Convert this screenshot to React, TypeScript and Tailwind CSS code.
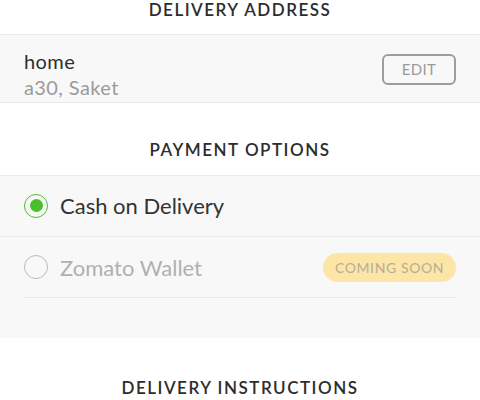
import React from "react";

export default function App() {
  return (
    <div
      className="w-[480px] h-[400px] bg-white overflow-hidden"
      style={{ fontFamily: "Lato, 'Noto Sans', sans-serif" }}
    >
      <div className="h-[35px] border-b border-[#ebe9ea] flex justify-center">
        <div className="h-[20px] leading-[20px] text-[17px] font-semibold tracking-[1.5px] text-[#2d2d2d]">
          DELIVERY ADDRESS
        </div>
      </div>
      <div className="h-[68px] bg-[#f9f8f9] border-b border-[#ebe9ea] flex items-start justify-between px-6 pt-[13px]">
        <div className="flex flex-col">
          <div className="leading-[26px] text-[20px] tracking-[0.4px] text-[#2d2d2d]">home</div>
          <div className="leading-[26px] text-[20px] tracking-[0.4px] text-[#9b9b9b]">a30, Saket</div>
        </div>
        <div className="mt-[6px] w-[74px] h-[31px] border-2 border-[#9d9d9d] rounded-[6px] flex items-center justify-center text-[15px] text-[#9a9a9a] tracking-[0.3px]">
          EDIT
        </div>
      </div>
      <div className="h-[73px] border-b border-[#ebe9ea] flex items-center justify-center pt-[22px]">
        <div className="text-[17px] font-semibold tracking-[1.5px] text-[#2d2d2d]">PAYMENT OPTIONS</div>
      </div>
      <div className="bg-[#f9f8f9] pb-[40px]">
        <div className="h-[61px] border-b border-[#ebe9ea] flex items-center px-6 pb-[1px]">
          <div className="w-[24px] h-[24px] rounded-full border-[1.5px] border-[#4bbf2b] flex items-center justify-center">
            <div className="w-[13px] h-[13px] rounded-full bg-[#4bbf2b]" />
          </div>
          <div className="ml-3 text-[22px] text-[#333333]">Cash on Delivery</div>
        </div>
        <div className="mx-6 h-[61px] border-b border-[#ebe9ea] flex items-center justify-between">
          <div className="flex items-center">
            <div className="w-[24px] h-[24px] rounded-full border-[1.5px] border-[#b9b9b9]" />
            <div className="ml-3 text-[22px] text-[#b0b0b0]">Zomato Wallet</div>
          </div>
          <div className="w-[133px] h-[29px] rounded-full bg-[#fce5a6] flex items-center justify-center text-[14px] text-[#b6ae9a] tracking-[0.6px]">
            COMING SOON
          </div>
        </div>
      </div>
      <div className="flex justify-center pt-[37px]">
        <div className="text-[17px] font-semibold tracking-[1.5px] text-[#2d2d2d]">DELIVERY INSTRUCTIONS</div>
      </div>
    </div>
  );
}
